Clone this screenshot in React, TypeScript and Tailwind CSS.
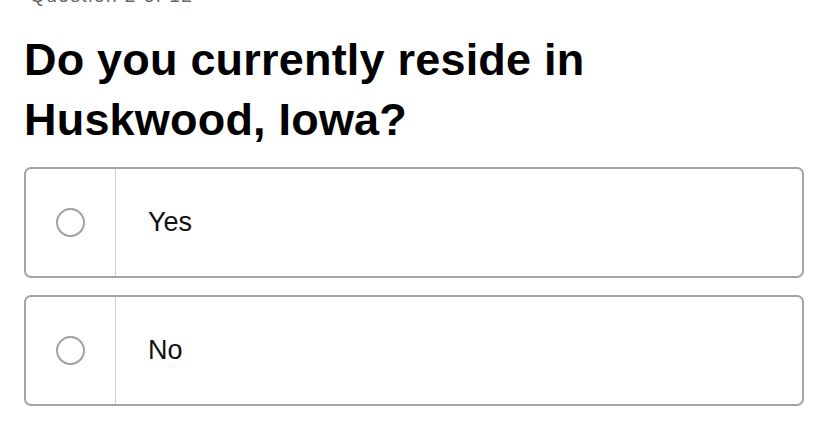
import React, { useState } from 'react';

const options = ['Yes', 'No'];

const RadioCard: React.FC<{ label: string; selected: boolean; onSelect: () => void }> = ({ label, selected, onSelect }) => (
  <button
    type="button"
    onClick={onSelect}
    className="flex h-[111px] w-[780px] items-stretch rounded-[7px] border-2 border-[#a4a4a4] bg-white text-left"
  >
    <div className="flex w-[90px] shrink-0 items-center justify-center border-r border-[#cfcfcf]">
      <span
        className={`flex h-[29px] w-[29px] items-center justify-center rounded-full border-2 ${selected ? 'border-[#222]' : 'border-[#a0a0a0]'}`}
      >
        {selected && <span className="h-[15px] w-[15px] rounded-full bg-[#222]" />}
      </span>
    </div>
    <div className="flex items-center pl-[32px] text-[27px] text-[#111] [font-family:'Liberation_Sans',Arial,sans-serif]">
      {label}
    </div>
  </button>
);

export default function App() {
  const [answer, setAnswer] = useState<string | null>(null);

  return (
    <div className="h-[432px] w-[826px] overflow-hidden bg-white px-6 [font-family:'Liberation_Sans',Arial,sans-serif]">
      <p className="-mt-[13px] h-[18px] pl-[6px] text-[19px] leading-[18px] tracking-[1.5px] text-[#666]">Question 2 of 12</p>
      <h1 className="mt-[25px] text-[45px] font-bold leading-[60px] tracking-[0.2px] text-black">
        Do you currently reside in
        <br />
        Huskwood, Iowa?
      </h1>
      <div className="mt-[17px] flex flex-col gap-[17px]">
        {options.map((o) => (
          <RadioCard key={o} label={o} selected={answer === o} onSelect={() => setAnswer(o)} />
        ))}
      </div>
    </div>
  );
}
